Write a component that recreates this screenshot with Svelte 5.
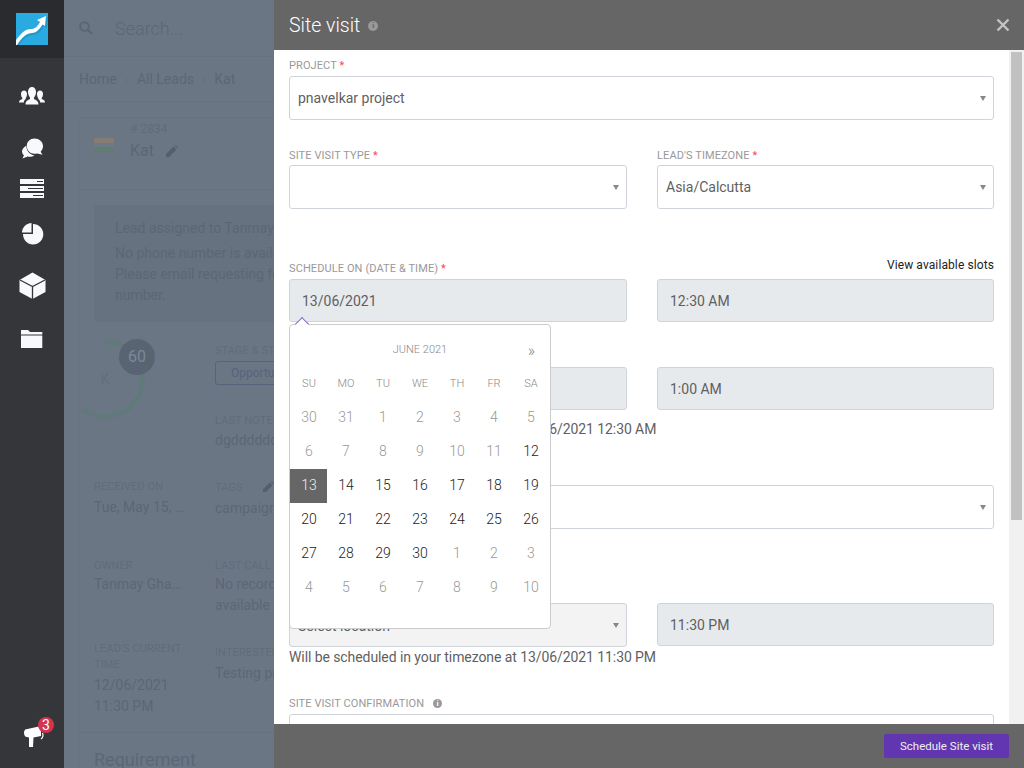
<script>
  const weekdays = ['SU', 'MO', 'TU', 'WE', 'TH', 'FR', 'SA'];
  const days = [
    [30, 0], [31, 0], [1, 0], [2, 0], [3, 0], [4, 0], [5, 0],
    [6, 0], [7, 0], [8, 0], [9, 0], [10, 0], [11, 0], [12, 1],
    [13, 2], [14, 1], [15, 1], [16, 1], [17, 1], [18, 1], [19, 1],
    [20, 1], [21, 1], [22, 1], [23, 1], [24, 1], [25, 1], [26, 1],
    [27, 1], [28, 1], [29, 1], [30, 1], [1, 0], [2, 0], [3, 0],
    [4, 0], [5, 0], [6, 0], [7, 0], [8, 0], [9, 0], [10, 0]
  ];
</script>

<div class="app">
  <nav class="sidebar">
    <div class="logo">
      <svg width="32" height="32" viewBox="0 0 32 32">
        <rect width="32" height="32" fill="#29abe2" />
        <path d="M0 28C6 20 10 17 15 17C19 17 21 15 24 10L21 8L31 3L30 14L27 12C24 18 20 21 16 21C11 21 6 25 1 32H0Z" fill="#1b8cbc" transform="translate(1 1)" opacity="0.6" />
        <path d="M0 27C6 19 10 16 15 16C19 16 21 14 24 9L21 7L30 3L29 13L26.500 11.500C23 17 20 20 16 20C11 20 6 24 1 32H0Z" fill="#fff" />
      </svg>
    </div>
    <div class="icons">
      <svg class="people" width="28" height="20" viewBox="0 0 28 20">
        <path d="M14 1C16.500 1 18 3 18 6C18 8.500 17 10.500 16 11.500V13C18 14 20.500 15 20.500 18.500H7.500C7.500 15 10 14 12 13V11.500C11 10.500 10 8.500 10 6C10 3 11.500 1 14 1Z" fill="#f7f9fb" />
        <path d="M6 4.500C7.500 4.500 8.800 5.500 9 7.500C9 9.500 8.500 11 7.800 12V13C6.800 13.600 6 14.800 5.800 16.500H1C1 14 3 13.500 4.300 13V12C3.500 11 3 9.500 3 7.500C3.200 5.500 4.500 4.500 6 4.500Z" fill="#f7f9fb" />
        <path d="M22 4.500C20.500 4.500 19.200 5.500 19 7.500C19 9.500 19.500 11 20.200 12V13C21.200 13.600 22 14.800 22.200 16.500H27C27 14 25 13.500 23.700 13V12C24.500 11 25 9.500 25 7.500C24.800 5.500 23.500 4.500 22 4.500Z" fill="#f7f9fb" />
      </svg>
      <svg class="chat" width="23" height="21" viewBox="0 0 24 22">
        <path d="M5.500 8C2.500 9.500 1 12 1 14C1 16 2 17.500 3 18L1.500 21.500L7 19.500C9.500 20 12 19.500 14 18C9 17.500 5.500 13 5.500 8Z" fill="#f7f9fb" />
        <path d="M14 0.500C19 0.500 23 3.800 23 8.500C23 11 22 13 20.500 14.500L22.500 17.500L17 16.200C16 16.500 15 16.600 14 16.600C9.500 16.600 6 13 6 8.500C6 3.800 9.500 0.500 14 0.500Z" fill="#f7f9fb" />
      </svg>
      <svg class="stack" width="24" height="19" viewBox="0 0 24 19">
        <path fill="#f7f9fb" fill-rule="evenodd" d="M0 0H24V5H0ZM17 2V3H23V2ZM0 7H24V12H0ZM8 9V10H23V9ZM0 14H24V19H0ZM13 16V17H23V16Z" />
      </svg>
      <svg class="pie" width="22" height="22" viewBox="0 0 22 22">
        <path d="M0 9.500C0 4.500 4 0.300 9.500 0V9.500Z" fill="#f7f9fb" />
        <path d="M11 1C16.800 1 21.300 5.500 21.300 11.200C21.300 17 16.800 21.500 11 21.500C5.500 21.500 1 17.200 1 11H11Z" fill="#f7f9fb" />
      </svg>
      <svg class="box" width="27" height="27" viewBox="0 0 27 27">
        <path d="M13.500 0.500L26.500 8V20L13.500 27L0.500 20V8Z" fill="#f7f9fb" />
        <path d="M1 8L13.500 14.500L26 8M13.500 14.500V27" fill="none" stroke="#35363a" stroke-width="1.300" />
      </svg>
      <svg class="folder" width="22" height="18" viewBox="0 0 22 18">
        <path d="M0 0H7L9 2H21.300V4.500H0Z" fill="#f7f9fb" />
        <path d="M0 5.500H21.300V18H0Z" fill="#f7f9fb" />
      </svg>
    </div>
    <div class="notify">
      <svg width="22" height="23" viewBox="0 0 22 23">
        <path d="M1 7.500C1 5 2.500 4 4.500 4L18 1V11L10.500 12.500L10 22H6V12.500L4 12C2 12 1 10 1 7.500Z" fill="#fff" />
        <path d="M19.500 8C20.500 10 20 13 18 14" fill="none" stroke="#fff" stroke-width="1.200" />
      </svg>
      <span class="badge">3</span>
    </div>
  </nav>

  <main class="page">
    <div class="search">
      <svg width="14" height="14" viewBox="0 0 14 14">
        <circle cx="5.500" cy="5.500" r="4.300" fill="none" stroke="#5b6775" stroke-width="2" />
        <path d="M8.500 8.500L13 13" stroke="#5b6775" stroke-width="2.400" />
      </svg>
      <span>Search...</span>
    </div>
    <div class="crumbs">
      <span>Home</span><i>›</i><span>All Leads</span><i>›</i><span>Kat</span>
    </div>
    <section class="lead">
      <div class="lead-head">
        <div class="flag"><b></b><b></b><b></b></div>
        <div>
          <div class="lead-id"># 2834</div>
          <div class="lead-name">
            Kat
            <svg width="12" height="12" viewBox="0 0 12 12"><path d="M0 12V9L7.500 1.500L10.500 4.500L3 12ZM8.500 0.500L9.500 0L12 2.500L11.500 3.500Z" fill="#535f6c" /></svg>
          </div>
        </div>
      </div>
      <div class="lead-alert">
        <p class="first">Lead assigned to Tanmay Ghadge</p>
        <p>No phone number is available for this lead.</p>
        <p>Please email requesting for the phone</p>
        <p>number.</p>
      </div>
      <div class="score">
        <svg width="80" height="80" viewBox="0 0 80 80">
          <path d="M40 2.500A37.500 37.500 0 1 1 18.300 70.600" fill="none" stroke="#5f7a78" stroke-width="4.500" />
          <text x="40" y="45" text-anchor="middle">K</text>
        </svg>
        <span class="score-num">60</span>
      </div>
      <div class="stage">
        <div class="cap">STAGE &amp; STATUS</div>
        <div class="pill">Opportunity</div>
        <div class="cap note-cap">LAST NOTE</div>
        <div class="val note-val">dgddddddf</div>
      </div>
      <div class="facts">
        <div class="fact f1"><div class="cap">RECEIVED ON</div><div class="val cut">Tue, May 15, 2018</div></div>
        <div class="fact f1 tags">
          <div class="cap">TAGS</div>
          <svg class="tag-pen" width="11" height="11" viewBox="0 0 12 12"><path d="M0 12V9L7.500 1.500L10.500 4.500L3 12ZM8.500 0.500L9.500 0L12 2.500L11.500 3.500Z" fill="#535f6c" /></svg>
          <div class="val">campaign</div>
        </div>
        <div class="fact f2"><div class="cap">OWNER</div><div class="val cut">Tanmay Ghadge</div></div>
        <div class="fact f2"><div class="cap">LAST CALL</div><div class="val">No record<br />available</div></div>
        <div class="fact end"><div class="cap wrap">LEAD'S CURRENT TIME</div><div class="val">12/06/2021<br />11:30 PM</div></div>
        <div class="fact end int"><div class="cap">INTERESTED IN</div><div class="val">Testing project</div></div>
      </div>
      <h2>Requirement</h2>
    </section>
  </main>

  <aside class="drawer">
    <header>
      <h1>Site visit</h1>
      <span class="info big">i</span>
      <svg class="close" width="14" height="14" viewBox="0 0 14 14"><path d="M1.500 1.500L12.500 12.500M12.500 1.500L1.500 12.500" stroke="#c4c4c4" stroke-width="2.400" /></svg>
    </header>

    <div class="scroller">
      <form class="form">
        <div class="field r1">
          <span class="lab">PROJECT <em>*</em></span>
          <div class="select">pnavelkar project</div>
        </div>

        <div class="cols r2">
          <div class="field">
            <span class="lab">SITE VISIT TYPE <em>*</em></span>
            <div class="select"></div>
          </div>
          <div class="field">
            <span class="lab">LEAD'S TIMEZONE <em>*</em></span>
            <div class="select">Asia/Calcutta</div>
          </div>
        </div>

        <div class="cols r3">
          <div class="field">
            <span class="lab">SCHEDULE ON (DATE &amp; TIME) <em>*</em></span>
            <div class="date-wrap">
              <div class="input">13/06/2021</div>
              <div class="calendar">
                <span class="tip"></span>
                <div class="cal-head">
                  <span></span>
                  <span class="month">JUNE 2021</span>
                  <span class="next">»</span>
                </div>
                <div class="cal-grid">
                  {#each weekdays as d}
                    <span class="dow">{d}</span>
                  {/each}
                  {#each days as [n, state]}
                    <span class="day" class:on={state === 1} class:sel={state === 2}>{n}</span>
                  {/each}
                </div>
              </div>
            </div>
          </div>
          <div class="field">
            <span class="lab slots">View available slots</span>
            <div class="input">12:30 AM</div>
          </div>
        </div>

        <div class="cols r4">
          <div class="field">
            <span class="lab"></span>
            <div class="input"></div>
          </div>
          <div class="field">
            <span class="lab"></span>
            <div class="input">1:00 AM</div>
          </div>
        </div>
        <p class="note n1">Will be scheduled in your timezone at 13/06/2021 12:30 AM</p>

        <div class="field r5">
          <span class="lab"></span>
          <div class="select"></div>
        </div>

        <div class="cols r6">
          <div class="field">
            <span class="lab"></span>
            <div class="select muted"><span class="behind">Select location</span></div>
          </div>
          <div class="field">
            <span class="lab"></span>
            <div class="input">11:30 PM</div>
          </div>
        </div>
        <p class="note">Will be scheduled in your timezone at 13/06/2021 11:30 PM</p>

        <div class="field r7">
          <span class="lab">SITE VISIT CONFIRMATION <span class="info">i</span></span>
          <div class="select"></div>
        </div>
      </form>
      <div class="scrollbar"><div class="thumb"></div></div>
    </div>

    <footer>
      <button type="button">Schedule Site visit</button>
    </footer>
  </aside>
</div>

<style>
  :global(body) {
    margin: 0;
    background: #6b7684;
    font-family: Roboto, "Liberation Sans", sans-serif;
  }

  .app {
    position: relative;
    display: flex;
    width: 1024px;
    height: 768px;
    overflow: hidden;
  }

  /* sidebar */
  .sidebar {
    position: relative;
    flex: 0 0 64px;
    display: flex;
    flex-direction: column;
    background: #35363a;
  }

  .logo {
    height: 58px;
    box-sizing: border-box;
    padding: 13px 16px 0;
    background: #2a2b2e;
  }

  .logo svg {
    display: block;
  }

  .icons {
    display: flex;
    flex-direction: column;
    align-items: center;
  }

  .icons svg {
    display: block;
  }

  .people { margin-top: 28px; margin-left: -1px; }
  .chat { margin-top: 32px; margin-left: 1px; }
  .stack { margin-top: 20px; }
  .pie { margin-top: 25px; margin-left: 1px; }
  .box { margin-top: 27px; }
  .folder { margin-top: 31px; }

  .notify {
    position: absolute;
    left: 23px;
    top: 725px;
  }

  .notify svg {
    display: block;
  }

  .badge {
    position: absolute;
    left: 15px;
    top: -8px;
    width: 16px;
    height: 16px;
    border-radius: 50%;
    background: #d5344f;
    color: #fff;
    font-size: 14px;
    line-height: 16px;
    text-align: center;
  }

  /* page under the drawer */
  .page {
    flex: 1;
    min-width: 0;
    color: #5b6775;
    font-size: 14px;
  }

  .search {
    display: flex;
    align-items: center;
    gap: 22px;
    height: 56px;
    padding-left: 15px;
    border-bottom: 1px solid #677280;
    font-size: 18px;
    font-weight: 300;
  }

  .crumbs {
    display: flex;
    align-items: center;
    gap: 8px;
    height: 44px;
    padding-left: 15px;
    border-bottom: 1px solid #677280;
  }

  .crumbs i {
    font-style: normal;
    color: #667280;
  }

  .lead {
    position: relative;
    width: 700px;
    height: 700px;
    margin: 15px 0 0 14px;
    border: 1px solid #667280;
    border-radius: 3px;
    box-sizing: border-box;
  }

  .lead-head {
    display: flex;
    gap: 16px;
    height: 72px;
    box-sizing: border-box;
    padding: 4px 0 0 15px;
    border-bottom: 1px solid #667280;
  }

  .flag {
    width: 20px;
    margin-top: 16px;
  }

  .flag b {
    display: block;
    height: 5px;
  }

  .flag b:first-child { background: #857d73; }
  .flag b:nth-child(2) { background: #6f7a86; height: 4px; }
  .flag b:last-child { background: #5f7e6e; }

  .lead-id {
    font-size: 12px;
    line-height: 14px;
    color: #606c7a;
  }

  .lead-name {
    display: flex;
    align-items: center;
    gap: 12px;
    margin-top: 4px;
    font-size: 16px;
    line-height: 22px;
  }

  .lead-alert {
    width: 600px;
    height: 117px;
    margin: 15px 0 0 15px;
    padding: 13px 21px;
    box-sizing: border-box;
    background: #66727f;
    border-radius: 3px;
  }

  .lead-alert p {
    margin: 0;
    line-height: 21px;
  }

  .lead-alert .first {
    margin-bottom: 4px;
  }

  .score {
    position: absolute;
    left: 0;
    top: 221px;
    width: 100px;
    height: 84px;
  }

  .score svg {
    position: absolute;
    left: -14px;
    top: 0;
  }

  .score text {
    font-size: 14px;
    fill: #626e7c;
  }

  .score-num {
    position: absolute;
    left: 40px;
    top: 0;
    width: 36px;
    height: 36px;
    border-radius: 50%;
    background: #586472;
    color: #7c8896;
    font-size: 16px;
    line-height: 36px;
    text-align: center;
  }

  .stage {
    position: absolute;
    left: 136px;
    top: 224px;
  }

  .cap {
    padding-top: 1px;
    font-size: 11px;
    letter-spacing: 0.1px;
    line-height: 16px;
    color: #606c7a;
    white-space: nowrap;
  }

  .cap.wrap {
    width: 91px;
    white-space: normal;
  }

  .val {
    line-height: 21px;
    white-space: nowrap;
  }

  .pill {
    width: 90px;
    height: 24px;
    margin-top: 2px;
    padding-left: 15px;
    box-sizing: border-box;
    border: 1px solid #55647c;
    border-radius: 3px;
    color: #55647c;
    font-size: 12px;
    line-height: 22px;
  }

  .note-cap {
    margin-top: 27px;
  }

  .note-val {
    margin-top: 1px;
  }

  .facts {
    display: grid;
    grid-template-columns: 91px 300px;
    column-gap: 30px;
    padding: 156px 0 0 15px;
    border-bottom: 1px solid #667280;
  }

  .fact {
    box-sizing: border-box;
    margin-bottom: 30px;
  }

  .fact .val {
    margin-top: 2px;
  }

  .f1 { height: 49px; }
  .f2 { height: 53px; }
  .f2 .val { margin-top: 0; }
  .end { margin-bottom: 15px; }

  .tags {
    position: relative;
    padding-top: 1px;
  }

  .tag-pen {
    position: absolute;
    left: 48px;
    top: 3px;
  }

  .int { padding-top: 4px; }

  .cut {
    overflow: hidden;
    text-overflow: ellipsis;
  }

  .lead h2 {
    margin: 15px 0 0 15px;
    font-size: 18px;
    font-weight: 400;
    line-height: 24px;
  }

  /* drawer */
  .drawer {
    position: absolute;
    left: 274px;
    top: 0;
    right: 0;
    bottom: 0;
    display: flex;
    flex-direction: column;
    background: #fff;
  }

  header {
    display: flex;
    align-items: center;
    flex: 0 0 50px;
    padding-left: 15px;
    background: #666;
  }

  h1 {
    margin: 0;
    font-size: 19.5px;
    font-weight: 300;
    color: #fff;
  }

  .info {
    display: inline-block;
    width: 9px;
    height: 9px;
    border-radius: 50%;
    background: #999;
    color: #fff;
    font-size: 8px;
    font-weight: 700;
    line-height: 9px;
    text-align: center;
    margin-left: 6px;
    vertical-align: 1px;
  }

  .info.big {
    width: 10px;
    height: 10px;
    line-height: 10px;
    margin: 2px 0 0 8px;
    color: #666;
  }

  .close {
    margin-left: auto;
    margin-right: 14px;
  }

  .scroller {
    flex: 1;
    display: flex;
    min-height: 0;
    overflow: hidden;
  }

  .form {
    flex: 1;
    min-width: 0;
    margin: 0;
    padding: 9px 15px 0;
    color: #5f5f5f;
  }

  .cols {
    display: grid;
    grid-template-columns: 338px 337px;
    column-gap: 30px;
  }

  .lab {
    display: block;
    height: 14px;
    margin-bottom: 4px;
    font-size: 11px;
    letter-spacing: 0.1px;
    line-height: 14px;
    color: #999;
  }

  .r1 .lab { margin-bottom: 3px; }
  .r2 .lab { margin-bottom: 2px; }

  .r3 .lab:not(.slots),
  .r7 .lab {
    padding-top: 1px;
    margin-bottom: 3px;
  }

  .lab em {
    color: #f44;
    font-style: normal;
  }

  .lab.slots {
    color: #222;
    font-size: 12px;
    text-align: right;
    margin-top: -3px;
    margin-bottom: 7px;
  }

  .select,
  .input {
    display: flex;
    align-items: center;
    box-sizing: border-box;
    font-size: 14px;
    border: 1px solid #cfd4da;
    border-radius: 3px;
  }

  .select {
    position: relative;
    height: 44px;
    padding-left: 8px;
    background: #fff;
  }

  .select::after {
    content: "";
    position: absolute;
    right: 7px;
    top: 19px;
    border-left: 3.5px solid transparent;
    border-right: 3.5px solid transparent;
    border-top: 5px solid #888;
  }

  .select.muted {
    background: #f3f3f3;
  }

  .behind {
    padding-top: 1px;
  }

  .input {
    height: 43px;
    padding-left: 12px;
    background: #e7eaed;
  }

  .r2 { margin-top: 29px; }
  .r3 { margin-top: 52px; }
  .r4 { margin-top: 27px; }
  .r5 { margin-top: 28px; }
  .r6 { margin-top: 56px; }
  .r7 { margin-top: 29px; }

  .note {
    margin: 0;
    font-size: 14px;
    letter-spacing: -0.08px;
    line-height: 20px;
  }

  .n1 {
    margin-top: 9px;
  }

  .date-wrap {
    position: relative;
  }

  .calendar {
    position: absolute;
    left: 0;
    top: 45px;
    z-index: 5;
    width: 262px;
    height: 305px;
    padding-top: 7px;
    box-sizing: border-box;
    background: #fff;
    border: 1px solid #ccc;
    border-radius: 4px;
    color: #333;
  }

  .tip {
    position: absolute;
    left: 7px;
    top: -6px;
    width: 9px;
    height: 9px;
    background: #fff;
    border-left: 1px solid #8a63c9;
    border-top: 1px solid #8a63c9;
    transform: rotate(45deg);
  }

  .cal-head {
    display: grid;
    grid-template-columns: 37px 185px 37px;
    height: 35px;
    align-items: center;
    text-align: center;
  }

  .month {
    padding-left: 1px;
    font-size: 11px;
    font-weight: 300;
    color: #888;
  }

  .next {
    padding: 1px 0 0 2px;
    font-size: 16px;
    font-weight: 300;
    color: #888;
  }

  .cal-grid {
    display: grid;
    grid-template-columns: repeat(7, 37px);
    grid-auto-rows: 34px;
  }

  .dow,
  .day {
    display: flex;
    align-items: center;
    justify-content: center;
    box-sizing: border-box;
    padding: 0 0 2px 1px;
  }

  .dow {
    font-size: 11px;
    font-weight: 300;
    color: #888;
  }

  .day {
    font-size: 14px;
    font-weight: 300;
    color: #999;
  }

  .day.on {
    color: #222;
  }

  .day.sel {
    background: #666;
    color: #eee;
  }

  .scrollbar {
    flex: 0 0 15px;
    background: #f1f1f1;
  }

  .thumb {
    width: 11px;
    height: 468px;
    margin: 2px 0 0 2px;
    background: #c1c1c1;
  }

  footer {
    flex: 0 0 44px;
    display: flex;
    align-items: center;
    justify-content: flex-end;
    padding-right: 15px;
    background: #666;
  }

  footer button {
    width: 125px;
    height: 24px;
    padding: 0;
    border: 0;
    border-radius: 2px;
    background: #6236b0;
    color: #eee;
    font-family: inherit;
    font-size: 11.5px;
  }
</style>
